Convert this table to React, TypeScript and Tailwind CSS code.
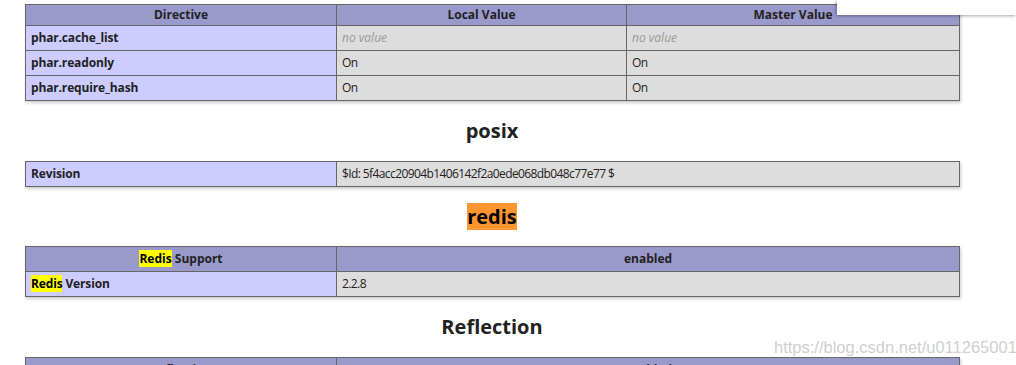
import React from 'react';

const base = 'border border-[#666666] px-[5px] text-[12px] leading-4 align-baseline';
const cell = `${base} py-[4px]`;
const h = `${cell} bg-[#9999cc] font-bold text-center`;
const hTop = `${base} py-[2px] bg-[#9999cc] font-bold text-center`;
const e = `${cell} bg-[#ccccff] font-bold tracking-[-0.15px]`;
const v = `${cell} bg-[#dddddd] tracking-[-0.6px]`;
const table = 'w-[934px] table-fixed border-collapse shadow-[1px_2px_3px_#cccccc]';
const h2 = 'mt-[17px] text-center text-[20px] leading-[26px] font-bold text-[#222222]';

const Hl = ({ children }: { children: React.ReactNode }) => (
	<span className="bg-[#ffff00] text-black">{children}</span>
);

const NoValue = () => <i className="tracking-normal text-[#999999]">no value</i>;

const App = () => {
	return (
		<div
			className="relative h-[365px] w-[1016px] overflow-hidden bg-white text-[#222222]"
			style={{ fontFamily: '"Open Sans", "Noto Sans", sans-serif' }}
		>
			<div className="ml-[25px] w-[934px] pt-[4px]">
				<table className={table}>
					<colgroup>
						<col className="w-[311px]" />
						<col className="w-[290px]" />
						<col className="w-[333px]" />
					</colgroup>
					<tbody>
						<tr>
							<th className={hTop}>Directive</th>
							<th className={hTop}>Local Value</th>
							<th className={hTop}>Master Value</th>
						</tr>
						<tr>
							<td className={e}>phar.cache_list</td>
							<td className={v}>
								<NoValue />
							</td>
							<td className={v}>
								<NoValue />
							</td>
						</tr>
						<tr>
							<td className={e}>phar.readonly</td>
							<td className={v}>On</td>
							<td className={v}>On</td>
						</tr>
						<tr>
							<td className={e}>phar.require_hash</td>
							<td className={v}>On</td>
							<td className={v}>On</td>
						</tr>
					</tbody>
				</table>

				<h2 className={`${h2} mb-[17px]`}>posix</h2>

				<table className={table}>
					<colgroup>
						<col className="w-[311px]" />
						<col className="w-[623px]" />
					</colgroup>
					<tbody>
						<tr>
							<td className={e}>Revision</td>
							<td className={v}>$Id: 5f4acc20904b1406142f2a0ede068db048c77e77 $</td>
						</tr>
					</tbody>
				</table>

				<h2 className={`${h2} mb-[16px]`}>
					<span className="bg-[#ff9632] text-black">redis</span>
				</h2>

				<table className={table}>
					<colgroup>
						<col className="w-[311px]" />
						<col className="w-[623px]" />
					</colgroup>
					<tbody>
						<tr>
							<th className={h}>
								<Hl>Redis</Hl> Support
							</th>
							<th className={h}>enabled</th>
						</tr>
						<tr>
							<td className={e}>
								<Hl>Redis</Hl> Version
							</td>
							<td className={v}>2.2.8</td>
						</tr>
					</tbody>
				</table>

				<h2 className={`${h2} mb-[17px]`}>Reflection</h2>

				<table className={table}>
					<colgroup>
						<col className="w-[311px]" />
						<col className="w-[623px]" />
					</colgroup>
					<tbody>
						<tr>
							<th className={h}>Reflection</th>
							<th className={h}>enabled</th>
						</tr>
					</tbody>
				</table>
			</div>

			{/* browser popup bar in the top right corner */}
			<div className="absolute right-0 top-0 h-[15px] w-[179px] bg-white shadow-[-1px_1px_3px_rgba(0,0,0,0.35)]" />

			{/* csdn watermark */}
			<div
				className="absolute left-[774px] top-[337px] text-[16.5px] leading-5 text-[#cfcfcf]"
				style={{ fontFamily: '"Liberation Sans", Arial, sans-serif' }}
			>
				https://blog.csdn.net/u011265001
			</div>
		</div>
	);
};

export default App;
